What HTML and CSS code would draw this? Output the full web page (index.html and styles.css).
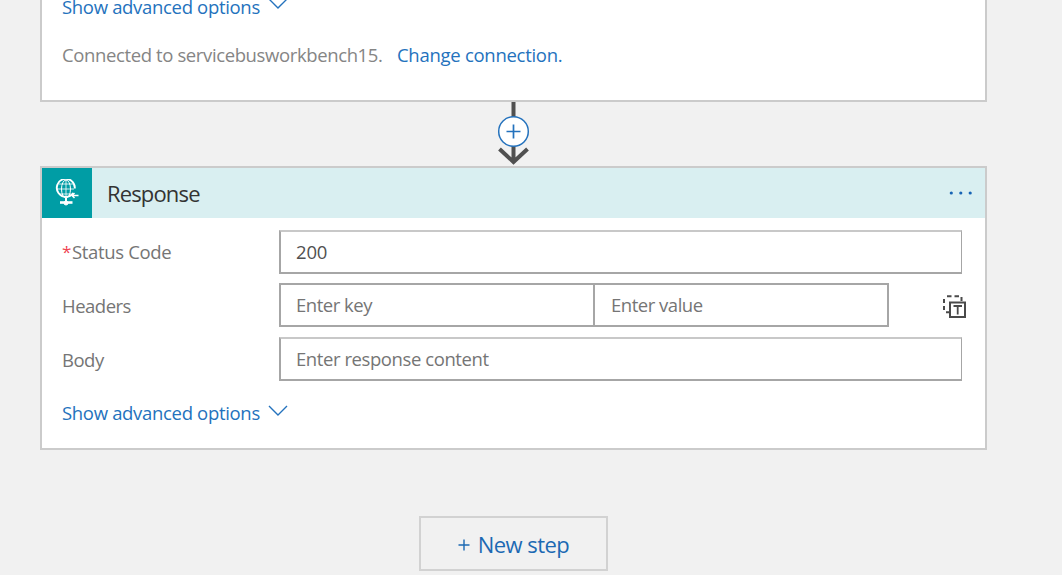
FILE: index.html
```html
<!DOCTYPE html>
<html lang="en">
<head>
<meta charset="utf-8">
<title>Workflow designer</title>
<link rel="stylesheet" href="styles.css">
</head>
<body>
<main class="designer">
  <section class="card card-previous">
    <a class="advanced"><span class="t-advanced">Show advanced options</span><svg class="chevron" width="20" height="12" viewBox="0 0 20 12"><path d="M1 1l9 9 9-9"/></svg></a>
    <p class="connection"><span class="t-connected">Connected to servicebusworkbench15.</span><a class="t-change">Change connection.</a></p>
  </section>
  <div class="connector">
    <svg width="32" height="64" viewBox="0 0 32 64">
      <path class="arrow" d="M15.500 0v60M1.500 47l14 13 14-13"/>
      <circle class="add-ring" cx="15.500" cy="29.500" r="14.800"/>
      <path class="add-plus" d="M8.500 29.500h14M15.500 22.500v14"/>
    </svg>
  </div>
  <section class="card card-response">
    <header class="card-header">
      <span class="card-icon">
        <svg width="24" height="28" viewBox="0 0 24 28">
          <path d="M18.200 14A9 9 0 1 1 19.800 9.500" stroke-width="1.900"/>
          <path d="M11 1v18M2 10h17M4 5h14M4 15h12" stroke-width="1" opacity=".8"/>
          <ellipse cx="11" cy="10" rx="4.500" ry="9" stroke-width="1"/>
          <path d="M23.500 16.500h-6.500M19.500 14L17 16.500l2.500 2.500" stroke-width="1.500"/>
          <path d="M11 19v4" stroke-width="2"/>
          <path d="M5 23.500h12.500" stroke-width="2.600"/>
          <circle cx="11" cy="24" r="2" fill="#fff"/>
        </svg>
      </span>
      <h1 class="title">Response</h1>
      <svg class="more" width="24" height="4" viewBox="0 0 24 4"><circle cx="2.300" cy="2" r="1.600"/><circle cx="11.800" cy="2" r="1.600"/><circle cx="21.200" cy="2" r="1.600"/></svg>
    </header>
    <div class="form">
      <div class="row">
        <label class="label label-status"><span class="star">*</span><span class="t-status">Status Code</span></label>
        <div class="field value">200</div>
      </div>
      <div class="row row-headers">
        <label class="label">Headers</label>
        <div class="pair">
          <div class="field key">Enter key</div>
          <div class="field val">Enter value</div>
        </div>
        <svg class="text-mode" width="24" height="24" viewBox="0 0 24 24">
          <path d="M4 1.200h4.500M11.500 1.200H16M18.500 2v4M1 4v4M1 11v4M3 17.200h3.500" stroke-width="2"/>
          <rect x="7" y="7.500" width="15" height="14.500" stroke-width="2"/>
          <path d="M10.500 11h8.500M14.700 11v8.500" stroke-width="1.800"/>
        </svg>
      </div>
      <div class="row row-body">
        <label class="label">Body</label>
        <div class="field">Enter response content</div>
      </div>
      <a class="advanced"><span class="t-advanced">Show advanced options</span><svg class="chevron" width="20" height="12" viewBox="0 0 20 12"><path d="M1 1l9 9 9-9"/></svg></a>
    </div>
  </section>
  <button class="new-step"><svg width="12" height="12" viewBox="0 0 12 12"><path d="M.5 6h11M6 .5v11"/></svg><span class="t-new">New step</span></button>
</main>
</body>
</html>
```
FILE: styles.css
```css
* { box-sizing: border-box; }
body {
  margin: 0;
  height: 575px;
  overflow: hidden;
  background: #f1f1f1;
  font: 18.5px/26px "Open Sans", "Noto Sans", sans-serif;
  color: #757575;
  white-space: nowrap;
}
svg { display: block; fill: none; flex: none; }
.designer {
  width: 947px;
  margin-left: 40px;
  display: flex;
  flex-direction: column;
  align-items: center;
}
.card { width: 100%; background: #fff; border: 2px solid #cbcbcb; }
.card-previous { height: 102px; border-top: 0; padding-left: 20px; }
.card-previous .advanced { margin-top: -6px; }
.advanced { display: flex; align-items: flex-start; color: #2472bd; }
.t-advanced { width: 206px; letter-spacing: -0.32px; }
.chevron { margin-top: 5px; stroke: #2472bd; stroke-width: 1.4; }
.card-previous .chevron { margin-top: 4px; }
.connection { display: flex; margin: 22px 0 0; color: #858585; }
.t-connected { width: 335px; letter-spacing: -0.38px; }
.t-change { color: #2472bd; letter-spacing: -0.28px; }
.connector { height: 64px; }
.connector svg { overflow: visible; }
.arrow { stroke: #505050; stroke-width: 4; }
.add-ring { fill: #fff; stroke: #2472bd; stroke-width: 1.5; }
.add-plus { stroke: #2472bd; stroke-width: 1.7; }
.card-response { height: 284px; }
.card-header { height: 50px; display: flex; align-items: center; background: #d9eff1; }
.card-icon {
  width: 50px; height: 50px;
  display: flex; align-items: center; justify-content: center;
  background: #009da5;
}
.card-icon svg { stroke: #fff; }
.title { margin: 0 0 0 15px; font-size: 22px; font-weight: 400; line-height: 30px; color: #333; letter-spacing: -0.85px; }
.more { margin: 0 12px 0 auto; fill: #1764b5; }
.form { padding: 12px 0 0 20px; }
.row { display: flex; height: 44px; }
.row-headers { margin-top: 9px; }
.row-body { margin: 10px 0 19px; }
.label { width: 217px; padding-top: 10px; letter-spacing: -0.5px; }
.label-status { display: flex; padding-top: 9px; letter-spacing: -0.35px; }
.star { width: 10px; color: #f04452; font-size: 17px; }
.field {
  width: 683px; height: 44px; padding: 7px 0 0 15px;
  border: 2px solid #a6a6a6; border-top-color: #c8c8c8; border-right-width: 1px;
  letter-spacing: -0.42px;
}
.value { color: #505050; letter-spacing: -0.2px; }
.pair { display: flex; width: 610px; border-top: 2px solid #a6a6a6; }
.pair .field { height: 42px; border-top: 0; letter-spacing: -0.48px; }
.pair .key { width: 314px; border-right: 0; }
.pair .val { width: 296px; padding-left: 16px; border-right-width: 2px; }
.text-mode { margin: 12px 0 0 54px; stroke: #4a4a4a; }
.new-step {
  display: flex; align-items: center; justify-content: center; gap: 8px;
  width: 189px; height: 55px; margin-top: 66px; padding: 0;
  border: 2px solid #d2d2d2; background: #f1f1f1;
  font: 22px/30px "Open Sans", "Noto Sans", sans-serif; color: #1c69b3;
}
.t-new { letter-spacing: -0.55px; }
.new-step svg { margin-top: 2px; stroke: #1c69b3; stroke-width: 1.4; }
```
